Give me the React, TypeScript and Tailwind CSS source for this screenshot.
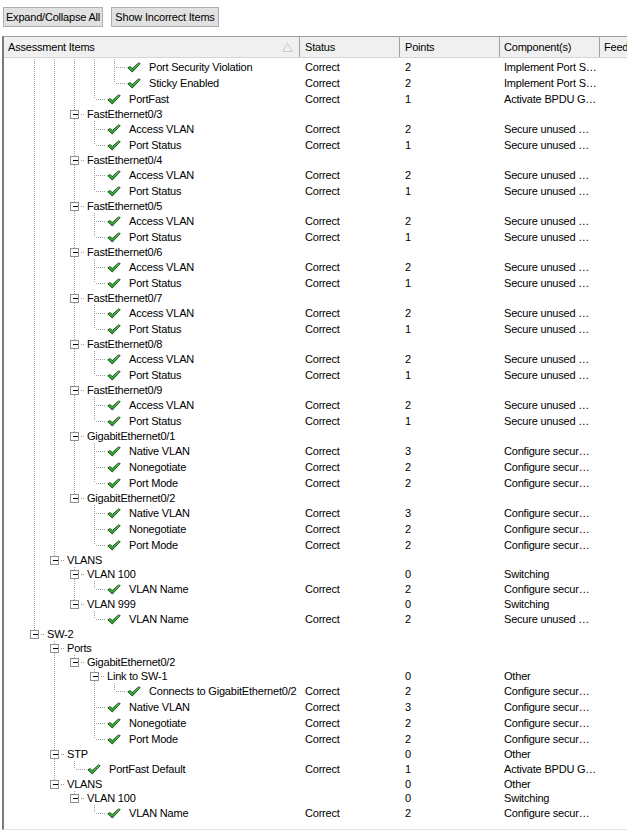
import React from "react";

type Row = {
  label: string;
  level: number;
  leaf?: boolean;
  status?: string;
  points?: string;
  comp?: string;
};

const SEC = "Secure unused …";
const CFG = "Configure secur…";

const fastEth = (n: number): Row[] => [
  { label: `FastEthernet0/${n}`, level: 2 },
  { label: "Access VLAN", level: 3, leaf: true, status: "Correct", points: "2", comp: SEC },
  { label: "Port Status", level: 3, leaf: true, status: "Correct", points: "1", comp: SEC },
];

const trunk = (level: number): Row[] => [
  { label: "Native VLAN", level, leaf: true, status: "Correct", points: "3", comp: CFG },
  { label: "Nonegotiate", level, leaf: true, status: "Correct", points: "2", comp: CFG },
  { label: "Port Mode", level, leaf: true, status: "Correct", points: "2", comp: CFG },
];

const rows: Row[] = [
  { label: "Port Security Violation", level: 4, leaf: true, status: "Correct", points: "2", comp: "Implement Port S…" },
  { label: "Sticky Enabled", level: 4, leaf: true, status: "Correct", points: "2", comp: "Implement Port S…" },
  { label: "PortFast", level: 3, leaf: true, status: "Correct", points: "1", comp: "Activate BPDU G…" },
  ...fastEth(3),
  ...fastEth(4),
  ...fastEth(5),
  ...fastEth(6),
  ...fastEth(7),
  ...fastEth(8),
  ...fastEth(9),
  { label: "GigabitEthernet0/1", level: 2 },
  ...trunk(3),
  { label: "GigabitEthernet0/2", level: 2 },
  ...trunk(3),
  { label: "VLANS", level: 1 },
  { label: "VLAN 100", level: 2, points: "0", comp: "Switching" },
  { label: "VLAN Name", level: 3, leaf: true, status: "Correct", points: "2", comp: CFG },
  { label: "VLAN 999", level: 2, points: "0", comp: "Switching" },
  { label: "VLAN Name", level: 3, leaf: true, status: "Correct", points: "2", comp: SEC },
  { label: "SW-2", level: 0 },
  { label: "Ports", level: 1 },
  { label: "GigabitEthernet0/2", level: 2 },
  { label: "Link to SW-1", level: 3, points: "0", comp: "Other" },
  { label: "Connects to GigabitEthernet0/2", level: 4, leaf: true, status: "Correct", points: "2", comp: CFG },
  ...trunk(3),
  { label: "STP", level: 1, points: "0", comp: "Other" },
  { label: "PortFast Default", level: 2, leaf: true, status: "Correct", points: "1", comp: "Activate BPDU G…" },
  { label: "VLANS", level: 1, points: "0", comp: "Other" },
  { label: "VLAN 100", level: 2, points: "0", comp: "Switching" },
  { label: "VLAN Name", level: 3, leaf: true, status: "Correct", points: "2", comp: CFG },
];

// does the node at level k (ancestor or self) continue below row i?
const hasNext = (i: number, k: number) => {
  for (let j = i + 1; j < rows.length; j++) {
    if (rows[j].level < k) return false;
    if (rows[j].level === k) return true;
  }
  return false;
};

const DOT = "#a0a0a0";

const Check = () => (
  <svg width="14" height="11" viewBox="0 0 14 11" className="shrink-0">
    <defs>
      <linearGradient id="chk" x1="0" y1="0" x2="0" y2="1">
        <stop offset="0" stopColor="#5fe05f" />
        <stop offset="1" stopColor="#15a015" />
      </linearGradient>
    </defs>
    <path
      d="M0.8 5.8 L3.2 4.5 L5.2 6.6 L11.4 1 L13.2 1.6 L5.3 10 Z"
      fill="url(#chk)"
      stroke="#1d3b1d"
      strokeWidth="0.9"
      strokeLinejoin="round"
    />
  </svg>
);

const TreeLines = ({ i, row, h }: { i: number; row: Row; h: number }) => {
  const L = row.level;
  const cy = h / 2;
  const x = 30 + 20 * L + 0.5;
  const next = hasNext(i, L);
  const guides = [];
  for (let k = 0; k < L; k++) {
    if (hasNext(i, k)) {
      const gx = 30 + 20 * k + 0.5;
      guides.push(<line key={k} x1={gx} y1={0} x2={gx} y2={h} stroke={DOT} strokeDasharray="1 1" />);
    }
  }
  return (
    <svg width={43 + 20 * L} height={h} className="shrink-0" shapeRendering="crispEdges">
      {guides}
      {row.leaf ? (
        <>
          <line x1={x} y1={0} x2={x} y2={next ? h : cy} stroke={DOT} strokeDasharray="1 1" />
          <line x1={x + 1} y1={cy + 0.5} x2={41 + 20 * L} y2={cy + 0.5} stroke={DOT} strokeDasharray="1 1" />
        </>
      ) : (
        <>
          <line x1={x} y1={0} x2={x} y2={cy - 4} stroke={DOT} strokeDasharray="1 1" />
          {next && <line x1={x} y1={cy + 5} x2={x} y2={h} stroke={DOT} strokeDasharray="1 1" />}
          <rect x={x - 4} y={cy - 4 + 0.5} width={8} height={8} fill="#fff" stroke="#919191" />
          <line x1={x - 2} y1={cy + 0.5} x2={x + 3} y2={cy + 0.5} stroke="#000" />
          <line x1={x + 6} y1={cy + 0.5} x2={40 + 20 * L} y2={cy + 0.5} stroke={DOT} strokeDasharray="1 1" />
        </>
      )}
    </svg>
  );
};

const TreeRow = ({ i, row }: { i: number; row: Row }) => {
  const h = row.leaf ? 16 : 14;
  return (
    <div className={`flex items-center ${row.leaf ? "h-[16px]" : "h-[14px]"}`}>
      <div className="w-[296px] flex items-center overflow-hidden whitespace-nowrap h-full">
        <TreeLines i={i} row={row} h={h} />
        {row.leaf && (
          <div className="flex items-center mr-[8px]">
            <Check />
          </div>
        )}
        <span>{row.label}</span>
      </div>
      <div className="w-[100px] pl-[5px]">{row.status}</div>
      <div className="w-[100px] pl-[5px]">{row.points}</div>
      <div className="w-[100px] pl-[4px] whitespace-nowrap">{row.comp}</div>
      <div className="flex-1" />
    </div>
  );
};

export default function App() {
  return (
    <div className="w-[627px] h-[836px] bg-white overflow-hidden text-[11px] tracking-[-0.2px] text-black font-['Liberation_Sans',Arial,sans-serif]">
      <div className="h-[36px] pt-[7px] pl-[3px] flex gap-[8px]">
        <button className="h-[20px] w-[100px] px-0 bg-[#e1e1e1] border border-[#adadad] leading-none whitespace-nowrap">
          Expand/Collapse All
        </button>
        <button className="h-[20px] w-[108px] px-0 bg-[#e1e1e1] border border-[#adadad] leading-none whitespace-nowrap">
          Show Incorrect Items
        </button>
      </div>
      <div className="ml-[2px] w-[700px] h-[794px] border-l-2 border-l-[#7a7a7a] border-t border-t-[#a0a0a0] border-b border-b-[#e3e3e3] overflow-hidden">
        <div className="flex h-[21px] bg-[#f0f0f0] border-b border-b-[#d5d5d5] mb-px">
          <div className="w-[296px] flex items-center justify-between pl-[4px] pr-[6px] border-r border-r-[#a0a0a0]">
            <span>Assessment Items</span>
            <svg width="11" height="9" viewBox="0 0 11 9">
              <path d="M5.5 0.5 L10.5 8.5 L0.5 8.5 Z" fill="none" stroke="#c8c8c8" />
            </svg>
          </div>
          <div className="w-[100px] flex items-center pl-[5px] border-r border-r-[#a0a0a0]">Status</div>
          <div className="w-[100px] flex items-center pl-[5px] border-r border-r-[#a0a0a0]">Points</div>
          <div className="w-[100px] flex items-center pl-[4px] border-r border-r-[#a0a0a0]">Component(s)</div>
          <div className="flex-1 flex items-center pl-[4px]">Feedback</div>
        </div>
        {rows.map((r, i) => (
          <TreeRow key={i} i={i} row={r} />
        ))}
      </div>
    </div>
  );
}
